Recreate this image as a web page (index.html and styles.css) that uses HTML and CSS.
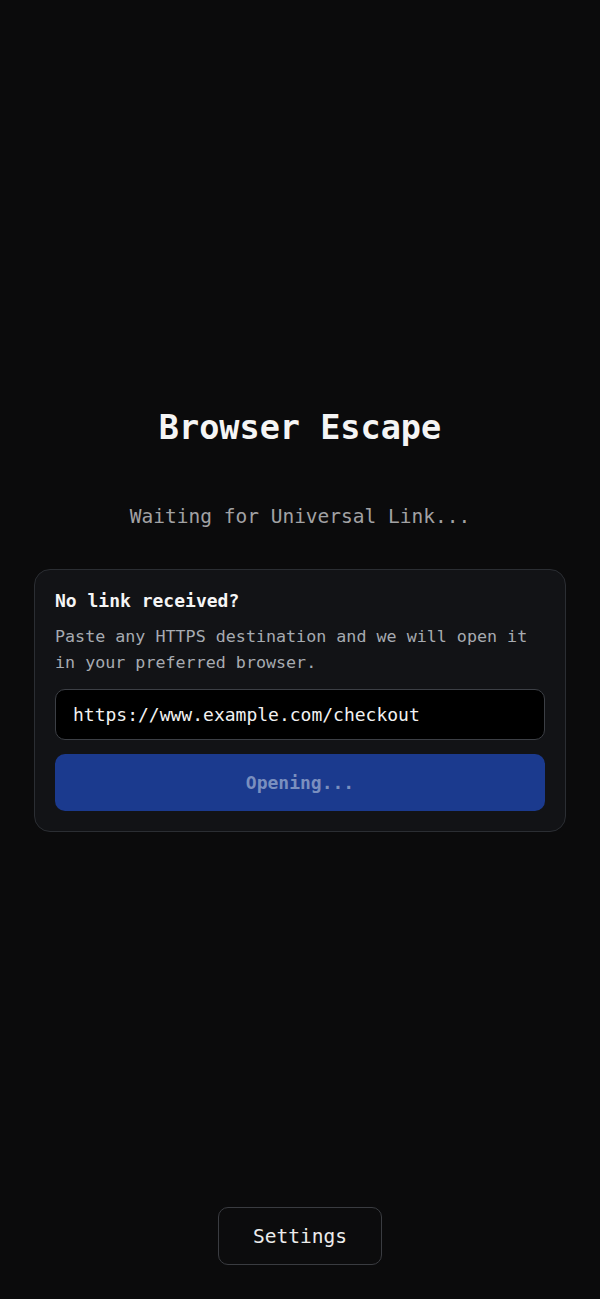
FILE: index.html
```html
<!DOCTYPE html>
<html lang="en">
<head>
<meta charset="utf-8">
<title>Browser Escape</title>
<link rel="stylesheet" href="styles.css">
</head>
<body>
<div class="page">
  <main class="main">
    <h1 class="title">Browser Escape</h1>
    <p class="status">Waiting for Universal Link...</p>
    <section class="card">
      <h2 class="card-title">No link received?</h2>
      <p class="card-text">Paste any HTTPS destination and we will open it in your preferred browser.</p>
      <div class="input">https://www.example.com/checkout</div>
      <button class="open-btn" disabled>Opening...</button>
    </section>
  </main>
  <footer class="footer">
    <button class="settings-btn">Settings</button>
  </footer>
</div>
</body>
</html>
```

FILE: styles.css
```css
* { box-sizing: border-box; }
html, body { margin: 0; padding: 0; }
body {
  background: #0b0b0c;
  font-family: "DejaVu Sans Mono", "Liberation Mono", monospace;
  color: #f2f2f2;
}
.page {
  min-height: 1299px;
  display: flex;
  flex-direction: column;
}
.main {
  flex: 1;
  display: flex;
  flex-direction: column;
  align-items: center;
  padding: 405px 34px 0;
}
.title {
  margin: 0;
  font-size: 33.5px;
  font-weight: bold;
  line-height: 46px;
  color: #f5f5f5;
}
.status {
  margin: 52px 0 0;
  font-size: 19.5px;
  line-height: 28px;
  color: #a2a2a4;
}
.card {
  align-self: stretch;
  margin-top: 38px;
  background: #121316;
  border: 1px solid #2b2e33;
  border-radius: 16px;
  padding: 18px 20px 20px;
  display: flex;
  flex-direction: column;
}
.card-title {
  margin: 0;
  font-size: 18px;
  font-weight: bold;
  line-height: 26px;
  color: #f5f5f5;
}
.card-text {
  margin: 9px 0 0;
  font-size: 16.7px;
  line-height: 26px;
  color: #a7abb1;
}
.input {
  margin-top: 14px;
  height: 51px;
  background: #000;
  border: 1px solid #3c3f45;
  border-radius: 10px;
  padding: 0 17px;
  display: flex;
  align-items: center;
  font-size: 18px;
  color: #f2f2f2;
}
.open-btn {
  margin-top: 14px;
  height: 57px;
  border: none;
  border-radius: 10px;
  background: #1b3a8e;
  color: #7a8fbf;
  font-family: inherit;
  font-size: 18px;
  font-weight: bold;
}
.footer {
  display: flex;
  justify-content: center;
  padding-bottom: 34px;
}
.settings-btn {
  width: 164px;
  height: 58px;
  background: #0c0c0d;
  border: 1px solid #3a3c41;
  border-radius: 10px;
  color: #ececec;
  font-family: inherit;
  font-size: 19.5px;
}
```
